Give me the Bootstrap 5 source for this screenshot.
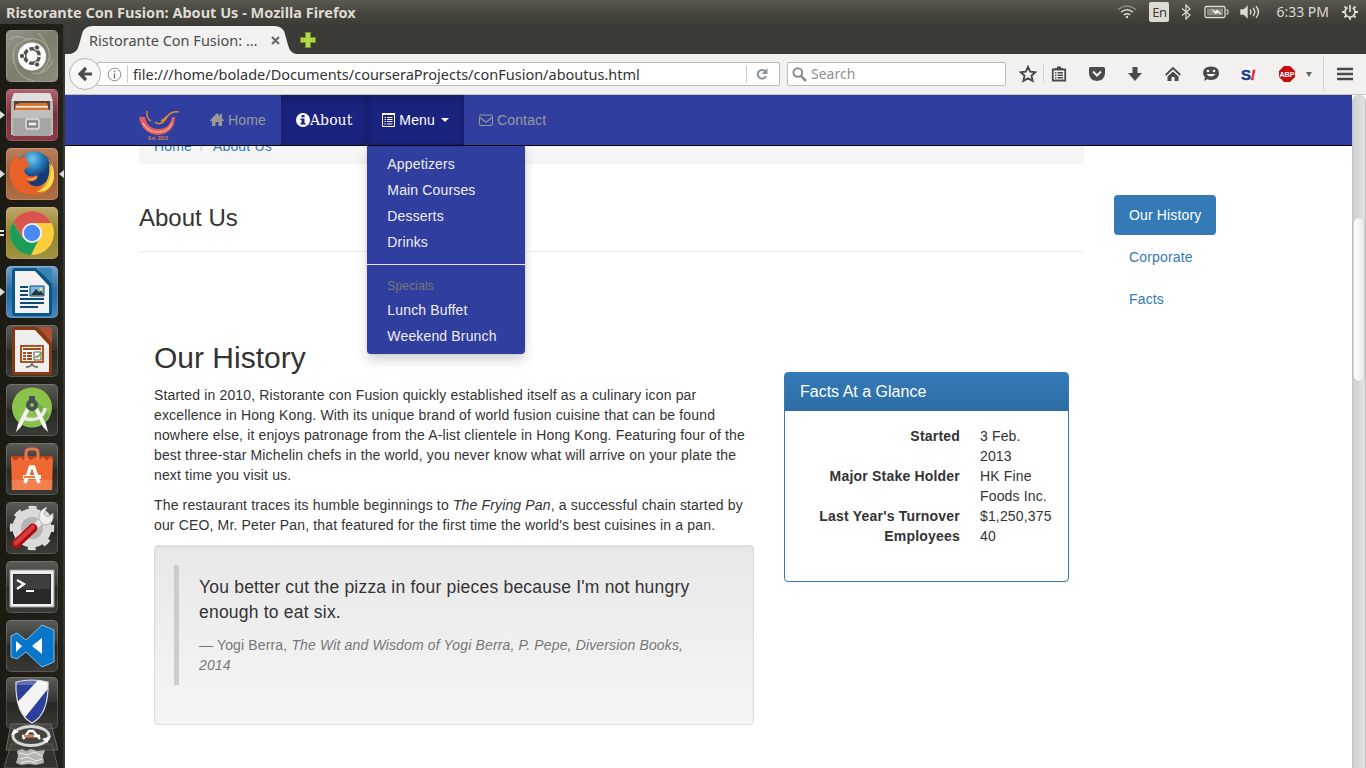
<!DOCTYPE html>
<html lang="en">
<head>
<meta charset="utf-8">
<title>Ristorante Con Fusion: About Us</title>
<meta name="viewport" content="width=device-width, initial-scale=1">
<link href="https://cdn.jsdelivr.net/npm/bootstrap@5.3.0/dist/css/bootstrap.min.css" rel="stylesheet">
<style>
body{height:768px;overflow:hidden;background:#fff;color:#333;font:14px/20px "Liberation Sans",Arial,sans-serif}
svg{display:block;flex:none}
a{text-decoration:none;color:#337ab7}
.sysbar{height:24px;flex:none;background:linear-gradient(#5a574e,#45443e 60%,#3d3c37);color:#dfdbd2;font-family:"Noto Sans",sans-serif;padding:0 8px 0 6px}
.sysbar .wintitle{font-size:14.5px;font-weight:700}
.sysbar .clock{font-size:14px;margin-left:15px}
.langbox{width:20px;height:20px;background:#dfdbd2;color:#3c3b37;border-radius:2px;font-size:13px;text-align:center;letter-spacing:-.4px;margin:0 12px}
.launcher{width:65px;flex:none;height:744px;background:linear-gradient(90deg,#1b1b14,#22221a 96%,#3a3a35 98%);padding:6px 0 0 6px;overflow:hidden}
.launcher .tiles{gap:7px}
.tile{width:52px;height:52px;flex:none;border-radius:5px;position:relative;box-shadow:inset 0 0 0 1px rgba(255,255,255,.15);background:linear-gradient(#5b5c58,#33342f 48%,#262722 50%,#3b3c38)}
.tile svg{width:52px;height:52px}
.tile svg.run{position:absolute;left:-6px;top:21px;width:5px;height:10px}
.tile svg.cur{position:absolute;left:52px;top:21px;width:6px;height:10px}
.tabstrip{height:30px;background:#3c3b37}
.fxtab{position:relative;margin-left:5px;width:226px;height:28px;margin-top:2px;color:#4c4c4c;font:14.5px/28px "Noto Sans",sans-serif}
.fxtab .shape{position:absolute;left:0;top:0}
.fxtab .inner{position:relative;padding:0 12px 0 19px}
.toolbar{height:41px;background:#f2f1ef;border-bottom:1px solid #c5c1bd;padding:0 12px 0 4px}
.backbtn{width:32px;height:32px;flex:none;border-radius:50%;border:1px solid #b9b5b0;background:#f8f7f6;z-index:2;position:relative}
.urlbox{height:24px;width:683px;flex:none;margin-left:-4px;border:1px solid #bfbbb7;background:#fff;border-radius:0 2px 2px 0;font:14.5px/20px "Noto Sans",sans-serif;color:#333}
.urlbox .addr{width:619px;flex:none;border-left:1px solid #ccc;padding-left:5px}
.urlbox .addr span{display:block;line-height:18px;height:18px}
.urlbox .reload{border-left:1px solid #ccc;height:17px;padding-left:9px}
.searchbox{height:24px;width:219px;flex:none;margin-left:7px;border:1px solid #bfbbb7;background:#fff;border-radius:2px;font:14px/20px "Noto Sans",sans-serif;color:#8f8f8f;padding-left:4px}
.toolicons{padding-left:13px}
.toolicons .pair{gap:22px;margin-left:7px}
.vline{width:1px;height:18px;background:#d6d3cf}
.viewport-area{height:673px}
.scrolltrack{width:14px;flex:none;border-left:1px solid #c2c1be;border-right:1px solid #bbb;background:linear-gradient(90deg,#d0d0d0,#e2e2e2);padding-top:122px;border-radius:7px 7px 0 0}
.scrollthumb{height:165px;border-radius:6px;border:1px solid #d2d0cd;background:linear-gradient(90deg,#fff,#eceae8)}
.site{letter-spacing:.15px}
.sitebar{height:51px;flex:none;background:#303f9f;border-bottom:1px solid #080808;position:relative;z-index:5;padding:0 0 0 74px}
.sitebar .nav-link{padding:15px;height:50px;color:#999;display:flex;align-items:center;line-height:20px;gap:4px}
.sitebar .nav-link.lit{background:#1a237e;color:#fff;box-shadow:inset 0 3px 9px rgba(0,0,0,.25)}
.serif-label{font-family:"DejaVu Serif",serif;letter-spacing:.05px}
.caret{border:4px solid transparent;border-top-color:#fff;border-bottom:0;margin-left:2px}
.sitemenu{position:absolute;left:0;top:51px;width:158px;background:#303f9f;border-radius:0 0 4px 4px;padding:5px 0;box-shadow:0 6px 12px rgba(0,0,0,.175),0 0 0 1px rgba(0,0,0,.05)}
.sitemenu a{display:block;padding:3px 20px;color:#eee}
.sitemenu .sep{height:1px;margin:9px 0;background:#e5e5e5}
.sitemenu .hd{font-size:12px;line-height:17px;padding:4px 20px 2px;color:#777}
.pagebody{margin:-18px 0 0 59px;width:1170px}
.maincol{width:975px;padding:0 15px}
.crumbs{height:36px;background:#f5f5f5;border-radius:4px;padding:8px 15px}
.crumbs .slash{color:#ccc;padding:0 9px 0 8px}
h3.title{font-size:24px;line-height:26px;margin:41px 0 20px;font-weight:400;letter-spacing:0}
.rule{height:1px;background:#eee;margin-bottom:89px}
h2.title{font-size:30px;line-height:33px;margin:0 0 11px;font-weight:400;letter-spacing:0}
.story{width:630px;padding:0 15px}
.story p{margin:0 0 10px}
.wellbox{height:180px;border:1px solid #dcdcdc;border-radius:4px;background:linear-gradient(#e8e8e8,#f5f5f5);padding:19px;box-shadow:inset 0 1px 3px rgba(0,0,0,.05),0 1px 0 rgba(255,255,255,.1)}
.quote{border-left:5px solid #ccc;padding:10px 20px;height:120px;font-size:17.5px;line-height:25px}
.quote p{letter-spacing:.21px}
.quote footer{font-size:14px;line-height:20px;color:#777}
.facts{width:315px;padding:31px 15px 0}
.facts .panelbox{border:1px solid #337ab7;border-radius:4px;height:210px;box-shadow:0 1px 2px rgba(0,0,0,.05)}
.facts .hd{height:38px;background:linear-gradient(#337ab7,#2e6da4);color:#fff;font-size:16px;line-height:18px;padding:10px 15px;letter-spacing:0}
.facts dl{padding:15px;margin:0;display:grid;grid-template-columns:160px 1fr;column-gap:20px}
.facts dt{text-align:right;letter-spacing:.2px}
.facts dd{margin:0}
.sidecol{padding:67px 0 0 15px}
.sidecol a{display:block;padding:10px 15px;margin-bottom:2px;border-radius:4px}
.sidecol a.on{background:#337ab7;color:#fff}
</style>
</head>
<body class="d-flex flex-column">
<header class="sysbar d-flex align-items-center justify-content-between">
  <span class="wintitle">Ristorante Con Fusion: About Us - Mozilla Firefox</span>
  <div class="d-flex align-items-center">
    <svg width="20" height="14" viewBox="0 0 20 14" fill="none" stroke="#dfdbd2" stroke-width="1.5"><path d="M1 4.500Q10-2.500 19 4.500" stroke="#918e85"/><path d="M4 7.300Q10 2.200 16 7.300M6.800 10Q10 7.400 13.200 10"/><circle cx="10" cy="12" r="1.200" fill="#dfdbd2" stroke="none"/></svg>
    <span class="langbox">En</span>
    <svg width="10" height="16" viewBox="0 0 10 16" fill="none" stroke="#dfdbd2" stroke-width="1.200"><path d="M1 4.500 9 11 5 15V1L9 5 1 11.500"/></svg>
    <svg width="25" height="14" viewBox="0 0 25 14" style="margin-left:13px"><rect x="1" y="1.500" width="20" height="11" rx="1.500" fill="none" stroke="#dfdbd2" stroke-width="1.300"/><path d="M22 5h2v4h-2" fill="none" stroke="#dfdbd2"/><path d="M3 3.500h16v7H3z" fill="#8b8880"/><path d="m7 4 5 2.500 1-2 5 5-5-2-1 2z" fill="#fff"/></svg>
    <svg width="21" height="14" viewBox="0 0 21 14" style="margin-left:11px" fill="none" stroke="#dfdbd2" stroke-width="1.400"><path d="M1 5h3l3-3v10L4 9H1z" fill="#dfdbd2"/><path d="M10 4.500q2 2.500 0 5M13 3q3.500 4 0 8M16 1.200q5 5.800 0 11.600"/></svg>
    <span class="clock">6:33 PM</span>
    <svg width="16" height="16" viewBox="0 0 16 16" style="margin-left:13px" fill="none" stroke="#dfdbd2"><circle cx="8" cy="8" r="5" stroke-width="1.700" stroke-dasharray="26.200 5.200" stroke-dashoffset="-10.500" transform="rotate(180 8 8)"/><path d="M8 1v7" stroke-width="1.700"/><path d="M3 8H0M13 8H16M4.500 11.500 2.500 13.500M11.500 11.500l2 2M4.200 4.200 2.500 2.500M11.800 4.200l1.700-1.700M8 13V16" stroke-width="1.800"/></svg>
  </div>
</header>
<div class="d-flex flex-grow-1">
  <aside class="launcher">
    <div class="tiles d-flex flex-column">
      <div class="tile" style="background:linear-gradient(135deg,#98968a,#7e7c6b 50%,#8f8d7e)"><svg viewBox="0 0 52 52"><g fill="none" stroke="#c3c1b4" stroke-opacity=".5" stroke-width="1.200"><path d="M18 9q26-4 26 22M8 34Q2 12 26 9M32 3q22 22 2 40M26 43Q40 46 47 30M8 22q-2 24 20 29M3 10Q10 4 20 9"/></g><circle cx="26" cy="26.500" r="14" fill="#fff"/><circle cx="26" cy="26" r="7.300" fill="none" stroke="#555348" stroke-width="3.400" stroke-dasharray="13.300 2" stroke-dashoffset="-1"/><g fill="#555348" stroke="#fff" stroke-width="1"><circle cx="16" cy="26" r="2.700"/><circle cx="31" cy="17.500" r="2.700"/><circle cx="31" cy="34.500" r="2.700"/></g></svg></div>
      <div class="tile" style="background:linear-gradient(#b2646e,#7b2f3c 50%,#8b3c48)"><svg viewBox="0 0 52 52"><path d="M8 4h36l3 10v32H5V14z" fill="#b9b9b9"/><path d="M8 4h36l3 8H5z" fill="#dedede"/><path d="M8 12h36v10H8z" fill="#55413a"/><path d="M9 16l5-2h27l2 8H9z" fill="#dc7530"/><path d="M10 17h32v1.500H10z" fill="#fff"/><path d="M7 21h38v26H7z" fill="#a6a6a6"/><path d="M7 21h38v8H7z" fill="#bebebe"/><rect x="20" y="30" width="13" height="10" rx="2" fill="#999" stroke="#e0e0e0" stroke-width="1.500"/><rect x="22" y="33" width="9" height="4" fill="#eee" stroke="#666"/></svg><svg class="run" viewBox="0 0 5 10"><path d="M0 1 5 5 0 9z" fill="#ddd"/></svg></div>
      <div class="tile" style="background:linear-gradient(#bc805e,#a05d35 50%,#b07046)"><svg viewBox="0 0 52 52"><defs><radialGradient id="globe" cx=".45" cy=".2"><stop stop-color="#6fcaf0"/><stop offset=".6" stop-color="#2376b2"/><stop offset="1" stop-color="#143b78"/></radialGradient><linearGradient id="fox" x2="1"><stop stop-color="#eb622a"/><stop offset=".65" stop-color="#e66022"/><stop offset="1" stop-color="#ffd83a"/></linearGradient></defs><circle cx="28" cy="22" r="18.500" fill="url(#globe)"/><path d="M9 8q2 4 5 3 4-3 7-3-2 5 2 8 1 3-3 4-4 3 1 7 5 3 10 0l1 2q-4 6-11 4 6 8 15 4 9-5 7-22 7 9 4 19-5 12-19 13Q10 47 5 33 1 20 9 8z" fill="url(#fox)"/><path d="M41 10q8 10 3 21-5 10-14 13 18 0 18-18 0-9-7-16z" fill="#f7df50"/><path d="M30 28q-4 4-10 2 5 5 11 0z" fill="#faa34c"/></svg><svg class="run" viewBox="0 0 5 10"><path d="M0 1 5 5 0 9z" fill="#ddd"/></svg><svg class="cur" viewBox="0 0 6 10"><path d="M6 1 1 5 6 9z" fill="#ddd"/></svg></div>
      <div class="tile" style="background:linear-gradient(#bda967,#92822c 50%,#a29342)"><svg viewBox="0 0 52 52"><circle cx="26" cy="26" r="22" fill="#fdcd3d"/><path d="M6.900 15A22 22 0 0 0 25 48L34 30 17 31z" fill="#1d9c58"/><path d="M26 16H45.600A22 22 0 0 0 7 15L17 31z" fill="#d9544e"/><circle cx="26" cy="26" r="10" fill="#f5f5f5"/><circle cx="26" cy="26" r="8.200" fill="#4a8af4"/></svg><svg class="run" viewBox="0 0 5 10"><path d="M0 3h4M0 7h4" stroke="#ddd" stroke-width="2"/></svg></div>
      <div class="tile" style="background:linear-gradient(#71a2c8,#2a6ba0 50%,#4889ba)"><svg viewBox="0 0 52 52"><path d="M9 2h21l16 14v31q0 3-3 3H9q-3 0-3-3V5q0-3 3-3z" fill="#0b5688"/><path d="M32 2h11q3 0 3 3v13z" fill="#3583b3"/><path d="M9 5h20l14 15v27H9z" fill="#f2f2f2"/><path d="M14 21h8M14 25h8M14 29h8M14 33h24M14 37h24M14 41h18" stroke="#0c4c7b" stroke-width="2"/><path d="M24 20h14v10H24z" fill="#78b9e5" stroke="#0c4c7b"/><path d="m25 29 5-6 3 3 2-1 3 4z" fill="#333"/><circle cx="35" cy="23" r="1.500" fill="#ffe052"/></svg><svg class="run" viewBox="0 0 5 10"><path d="M0 1 5 5 0 9z" fill="#ddd"/></svg></div>
      <div class="tile"><svg viewBox="0 0 52 52"><path d="M9 2h21l16 14v31q0 3-3 3H9q-3 0-3-3V5q0-3 3-3z" fill="#8b3511"/><path d="M32 2h11q3 0 3 3v13z" fill="#ae5131"/><path d="M9 5h20l14 15v27H9z" fill="#eee"/><path d="M15 21h22v16H15z" fill="#fff" stroke="#b65222" stroke-width="2"/><path d="M17 24h18M17 28h3m1 0h5M17 31h3m1 0h5M17 34h3m1 0h5" stroke="#a9481c" stroke-width="2"/><path d="M28 27h7v8h-7z" fill="#fff" stroke="#555"/><path d="m29 33 2-2 1 1 3-4" stroke="#56af3b" fill="none" stroke-width="1.500"/><path d="M26 38v3m-6 1q5 0 6-3 1 3 6 3" stroke="#777" stroke-width="2" fill="none"/></svg></div>
      <div class="tile"><svg viewBox="0 0 52 52"><circle cx="26" cy="23.500" r="20" fill="#8bc34a"/><path d="m30 16 14 15-8 10L25 23z" fill="#689f38" opacity=".55"/><path d="M17 34q11 4 18-2 4-4 4-8" fill="none" stroke="#e9e9e9" stroke-width="3.500"/><path d="m20 24-8 16-2 8 5-5 9-18zM32 24l8 16 2 8-5-5-9-18z" fill="#f3f3f3"/><circle cx="26" cy="21" r="4" fill="#8bc34a" stroke="#4b5054" stroke-width="4"/><path d="M23 12h6v5h-6z" fill="#4b5054"/></svg></div>
      <div class="tile"><svg viewBox="0 0 52 52"><path d="M5 13h42l-1 34H6z" fill="#ef6832"/><path d="M5 13h42v4l-3-3-3 4-4-4-4 3-4-3-4 3-4-3-4 3-3-3-4 4-4-3z" fill="#bd4218"/><path d="M5.700 37h40.600L46 47H6z" fill="#f2814f"/><path d="M20 18v-8q0-4 4-4h4q4 0 4 4v8" fill="none" stroke="#e9754a" stroke-width="3"/><path d="m19 40 5.500-16h3L33 40" fill="none" stroke="#fff" stroke-width="3.600"/><path d="M17 34h18" stroke="#fff" stroke-width="4"/><path d="M18 34h11" stroke="#f06a31" stroke-width="1.800"/></svg></div>
      <div class="tile"><svg viewBox="0 0 52 52"><circle cx="26" cy="26" r="15" fill="none" stroke="#dadada" stroke-width="9"/><circle cx="26" cy="26" r="20" fill="none" stroke="#dadada" stroke-width="4.500" stroke-dasharray="7.854 7.854" stroke-dashoffset="3.900"/><circle cx="26" cy="26" r="11" fill="#b5b5b5"/><path d="M22 32 37 17" stroke="#e8e8e8" stroke-width="6"/><path d="M33 17q-1-9 8-12l-3 7 4 3 5-4q2 11-8 12-4 0-6-6z" fill="#eee" stroke="#999" stroke-width=".7"/><path d="M10 42 27 26" stroke="#a70d13" stroke-width="9" stroke-linecap="round"/><path d="M10 41 27 25" stroke="#d83a38" stroke-width="4.500" stroke-linecap="round"/></svg></div>
      <div class="tile"><svg viewBox="0 0 52 52"><path d="M4 9h44v37H4z" fill="#f0f0f0" stroke="#999"/><path d="M7 13h38v30H7z" fill="#272929"/><path d="M8 14h36v14H8z" fill="#3e4040"/><path d="m11 19 7 4-7 5M20 30h8" fill="none" stroke="#fff" stroke-width="2.200"/></svg></div>
      <div class="tile"><svg viewBox="0 0 52 52"><path d="M36 5 20 20l-9-7-6 3v21l6 2 9-7 16 15 12-5V10z" fill="#0877ca" stroke="#a8d3ef" stroke-width=".8"/><path d="m10 21 6 5-6 6zM36 18v16L26 26z" fill="#fff"/></svg></div>
      <div class="tile" style="margin-top:-2px"><svg viewBox="0 0 52 52"><defs><clipPath id="shieldclip"><path d="M10 5q16-4 32 0 1 32-16 41Q9 37 10 5z"/></clipPath></defs><g clip-path="url(#shieldclip)"><path d="M5 0h42v48H5z" fill="#2b3f9b"/><path d="M5 32 35 0l10 8L16 44z" fill="#f4f4f4"/><path d="M8 2h34v6H8z" fill="#fff" opacity=".25"/></g><path d="M10 5q16-4 32 0 1 32-16 41Q9 37 10 5z" fill="none" stroke="#ddd" stroke-width="1.200"/></svg></div>
      <svg width="54" height="48" viewBox="0 0 54 48" style="margin:-14px 0 0 -2px;position:relative"><path d="M7 2h40l7 26H2z" fill="#555650" fill-opacity=".55" stroke="#696a66"/><path d="M7 22h41l6 24H0z" fill="#44453f" fill-opacity=".5" stroke="#5d5e59"/><ellipse cx="27" cy="14" rx="18" ry="9.500" fill="#44453f" stroke="#d8d8d8" stroke-width="3"/><path d="m19 17 6-8h4l7 8M18 14h18" fill="none" stroke="#fff" stroke-width="2.500"/><path d="M20 14h10" stroke="#ec642b" stroke-width="1.800"/><path d="m7 13 3-6 5 3zM47 14l-4 7-5-4z" fill="#fff"/><path d="m13 29 5-2 4 2 5-2 6 2 8-1-2 6 1 7-8 2-7-1-8 1-5-2 2-7z" fill="#b5b5b0"/><path d="m15 31 8 2 7-3 8 4M16 37l8-2 8 4 6-2M17 41l7-2 8 2" fill="none" stroke="#eee"/></svg>
    </div>
  </aside>
  <div class="flex-grow-1">
    <div class="tabstrip d-flex">
      <div class="fxtab"><svg class="shape" width="226" height="28" viewBox="0 0 226 28"><path d="M0 28q7-1 9-9l3-11q2-8 11-8h181q9 0 11 8l3 11q2 8 8 9z" fill="#f2f1ef"/></svg>
        <div class="inner d-flex align-items-center justify-content-between"><span>Ristorante Con Fusion: …</span><svg width="9" height="9" viewBox="0 0 9 9" class="me-1"><path d="m1 1 7 7M8 1 1 8" stroke="#666" stroke-width="2"/></svg></div></div>
      <svg width="18" height="18" viewBox="0 0 18 18" style="margin:7px 0 0 3px"><path d="M6.500 1.500h5v5h5v5h-5v5h-5v-5h-5v-5h5z" fill="#b4d84b" stroke="#6e9825"/></svg>
    </div>
    <div class="toolbar d-flex align-items-center">
      <div class="backbtn d-flex align-items-center justify-content-center"><svg width="16" height="16" viewBox="0 0 16 16"><path d="M15 8H4M9 2 3 8l6 6" fill="none" stroke="#4a4a4a" stroke-width="3.200"/></svg></div>
      <div class="urlbox d-flex align-items-center"><svg width="15" height="15" viewBox="0 0 15 15" style="margin:0 5px 0 9px"><circle cx="7.500" cy="7.500" r="6.300" fill="none" stroke="#8c8c8c"/><path d="M7.500 6.500v5M7.500 3.500v1.700" stroke="#777" stroke-width="1.400"/></svg><div class="addr"><span>file:///home/bolade/Documents/courseraProjects/conFusion/aboutus.html</span></div>
        <span class="reload d-flex align-items-center"><svg width="12" height="12" viewBox="0 0 12 12"><path d="M9.300 3.500A4.300 4.300 0 1 0 10 8" fill="none" stroke="#85939f" stroke-width="2"/><path d="M11.500 0v6h-6z" fill="#85939f"/></svg></span></div>
      <div class="searchbox d-flex align-items-center"><svg width="15" height="15" viewBox="0 0 15 15" class="me-1"><circle cx="5.800" cy="5.500" r="4.300" fill="none" stroke="#8d8d8d" stroke-width="2"/><path d="m9 9 5 5" stroke="#8d8d8d" stroke-width="2.500"/></svg>Search</div>
      <div class="toolicons d-flex align-items-center">
        <svg width="18" height="18" viewBox="0 0 18 18"><path d="m9 1.800 2.200 4.800 5.200.6-3.900 3.500 1.100 5.200L9 13.300l-4.600 2.600 1.100-5.200-3.900-3.500 5.200-.6z" fill="none" stroke="#4a4a4a" stroke-width="1.900"/></svg>
        <span class="vline" style="margin-left:6px"></span>
        <div class="pair d-flex align-items-center">
        <svg width="16" height="16" viewBox="0 0 16 16"><path d="M1.800 3.500h12.400v11H1.800z" fill="#fff" stroke="#4a4a4a" stroke-width="1.800"/><path d="M4 4V2h2V.500h4V2h2v2z" fill="#4a4a4a"/><path d="M4 6.700h1.500m1 0H12M4 9.200h1.500m1 0H12M4 11.700h1.500m1 0H12" stroke="#4a4a4a" stroke-width="1.400"/></svg>
        <svg width="16" height="16" viewBox="0 0 16 16"><path d="M1.500 1h13Q16 1 16 2.500V7q0 7-8 8-8-1-8-8V2.500Q0 1 1.500 1z" fill="#4a4a4a"/><path d="m4 5.500 4 4 4-4" fill="none" stroke="#f2f1ef" stroke-width="2"/></svg>
        <svg width="16" height="16" viewBox="0 0 16 16"><path d="M5.500 1h5v6H15l-7 8-7-8h4.500z" fill="#4a4a4a"/></svg>
        <svg width="16" height="16" viewBox="0 0 16 16"><path d="M.7 9 8 2l7.300 7" fill="none" stroke="#4a4a4a" stroke-width="1.800"/><path d="m8 5.500 5.500 5V15H9.500v-4h-3v4h-4v-4.500z" fill="#4a4a4a"/></svg>
        <svg width="16" height="16" viewBox="0 0 16 16"><path d="M8 .500q8 0 8 6.500t-8 7q-3 0-4-.7L1 15l1-3.500Q0 9.500 0 7 0 .500 8 .500z" fill="#4a4a4a"/><circle cx="5" cy="5" r="1.300" fill="#fff"/><circle cx="11" cy="5" r="1.300" fill="#fff"/><path d="M3.500 8h9q-4.500 5-9 0z" fill="#fff"/></svg>
        <svg width="16" height="16" viewBox="0 0 16 16"><circle cx="8" cy="8" r="7.800" fill="#fff"/><text x="0" y="13.500" font-family="Liberation Sans,sans-serif" font-weight="700" font-size="15" fill="#164291" stroke="#164291" stroke-width=".6">S</text><text x="9.500" y="13.500" font-family="Liberation Sans,sans-serif" font-style="italic" font-weight="700" font-size="15" fill="#e22" stroke="#e22" stroke-width=".5">!</text></svg>
        <svg width="16" height="16" viewBox="0 0 16 16"><path d="M5 0h6l5 5v6l-5 5H5l-5-5V5z" fill="#c70d0e"/><text x="8" y="10.700" text-anchor="middle" font-family="Liberation Sans,sans-serif" font-weight="700" font-size="7.200" fill="#fff">ABP</text></svg>
        </div>
        <svg width="6" height="5" viewBox="0 0 6 5" style="margin-left:11px"><path d="M0 0h6L3 5z" fill="#666"/></svg>
        <span class="vline" style="height:34px;margin-left:11px"></span>
        <svg width="16" height="14" viewBox="0 0 16 14" style="margin-left:13px"><path d="M0 2h16M0 7h16M0 12h16" stroke="#4a4a4a" stroke-width="2.600"/></svg>
      </div>
    </div>
    <div class="viewport-area d-flex">
      <div class="site flex-grow-1 overflow-hidden">
        <nav class="sitebar d-flex">
          <svg width="41" height="30" viewBox="0 0 41 30" style="margin:15px 15px 0 0"><path d="M0 7h6q2 12 13.500 12T33 7h3q-1 17-17 18Q3 24 0 7z" fill="#e45b61"/><path d="M4 13q5 9 15 9t14-9" fill="none" stroke="#f3c69c" stroke-width="1.500" stroke-dasharray="1.500 .7"/><path d="M8 1q-1 7 4 10M16 12q6 5 12-5 4-6 12-5M22 11q4-2 6-5" fill="none" stroke="#d98630" stroke-width="1.500"/><text x="19" y="29.500" text-anchor="middle" font-family="Liberation Sans,sans-serif" font-weight="700" font-size="4.500" letter-spacing="0" fill="#d9864c">Est. 2013</text></svg>
          <a class="nav-link" href="#"><svg width="14" height="14" viewBox="0 0 14 14"><path d="M7 0 10 3V1h2v4l2.500 3H12v5H8.500V9h-3v4H2V8H-.5z" fill="#999"/></svg>Home</a>
          <a class="nav-link lit" href="#" style="gap:0"><svg width="14" height="14" viewBox="0 0 14 14"><circle cx="7" cy="7" r="7" fill="#fff"/><path d="M5.500 2h3v2.300h-3zM4.500 5.500h4V10h1v1.500h-5V10h1V7h-1z" fill="#1a237e"/></svg><span class="serif-label">About</span></a>
          <div class="position-relative">
            <a class="nav-link lit" href="#"><svg width="13" height="14" viewBox="0 0 13 14"><path d="M.5.500h12v13H.5z" fill="none" stroke="#fff"/><path d="M0 0h13v2H0z" fill="#fff"/><path d="M2.500 4.500H4m1 0h5.500M2.500 6.500H4m1 0h5.500M2.500 8.500H4m1 0h5.500M2.500 11H4m1 0h5.500" stroke="#fff" stroke-width="1.200"/></svg>Menu<i class="caret"></i></a>
            <div class="sitemenu"><a href="#">Appetizers</a><a href="#">Main Courses</a><a href="#">Desserts</a><a href="#">Drinks</a><div class="sep"></div><div class="hd">Specials</div><a href="#">Lunch Buffet</a><a href="#">Weekend Brunch</a></div>
          </div>
          <a class="nav-link" href="#"><svg width="14" height="14" viewBox="0 0 14 14"><rect x=".5" y="2" width="13" height="10.500" rx="1.500" fill="none" stroke="#999"/><path d="m1 4.500 5 4q1 .8 2 0l5-4" fill="none" stroke="#999" stroke-width="1.100"/></svg>Contact</a>
        </nav>
        <main class="pagebody d-flex">
          <div class="maincol">
            <div class="crumbs"><a href="#">Home</a><span class="slash">/</span><a href="#">About Us</a></div>
            <h3 class="title">About Us</h3>
            <div class="rule"></div>
            <div class="d-flex">
              <section class="story">
                <h2 class="title">Our History</h2>
                <p>Started in 2010, Ristorante con Fusion quickly established itself as a culinary icon par excellence in Hong Kong. With its unique brand of world fusion cuisine that can be found nowhere else, it enjoys patronage from the A-list clientele in Hong Kong. Featuring four of the best three-star Michelin chefs in the world, you never know what will arrive on your plate the next time you visit us.</p>
                <p>The restaurant traces its humble beginnings to <em>The Frying Pan</em>, a successful chain started by our CEO, Mr. Peter Pan, that featured for the first time the world's best cuisines in a pan.</p>
                <div class="wellbox"><div class="quote"><p>You better cut the pizza in four pieces because I'm not hungry enough to eat six.</p><footer>— Yogi Berra, <em>The Wit and Wisdom of Yogi Berra, P. Pepe, Diversion Books, 2014</em></footer></div></div>
              </section>
              <section class="facts"><div class="panelbox"><div class="hd">Facts At a Glance</div>
                <dl><dt>Started</dt><dd>3 Feb. 2013</dd><dt>Major Stake Holder</dt><dd>HK Fine Foods Inc.</dd><dt>Last Year's Turnover</dt><dd>$1,250,375</dd><dt>Employees</dt><dd>40</dd></dl></div></section>
            </div>
          </div>
          <div class="sidecol"><a class="on" href="#">Our History</a><a href="#">Corporate</a><a href="#">Facts</a></div>
        </main>
      </div>
      <div class="scrolltrack"><div class="scrollthumb"></div></div>
    </div>
  </div>
</div>
<script src="https://cdn.jsdelivr.net/npm/bootstrap@5.3.0/dist/js/bootstrap.bundle.min.js"></script>
</body>
</html>
